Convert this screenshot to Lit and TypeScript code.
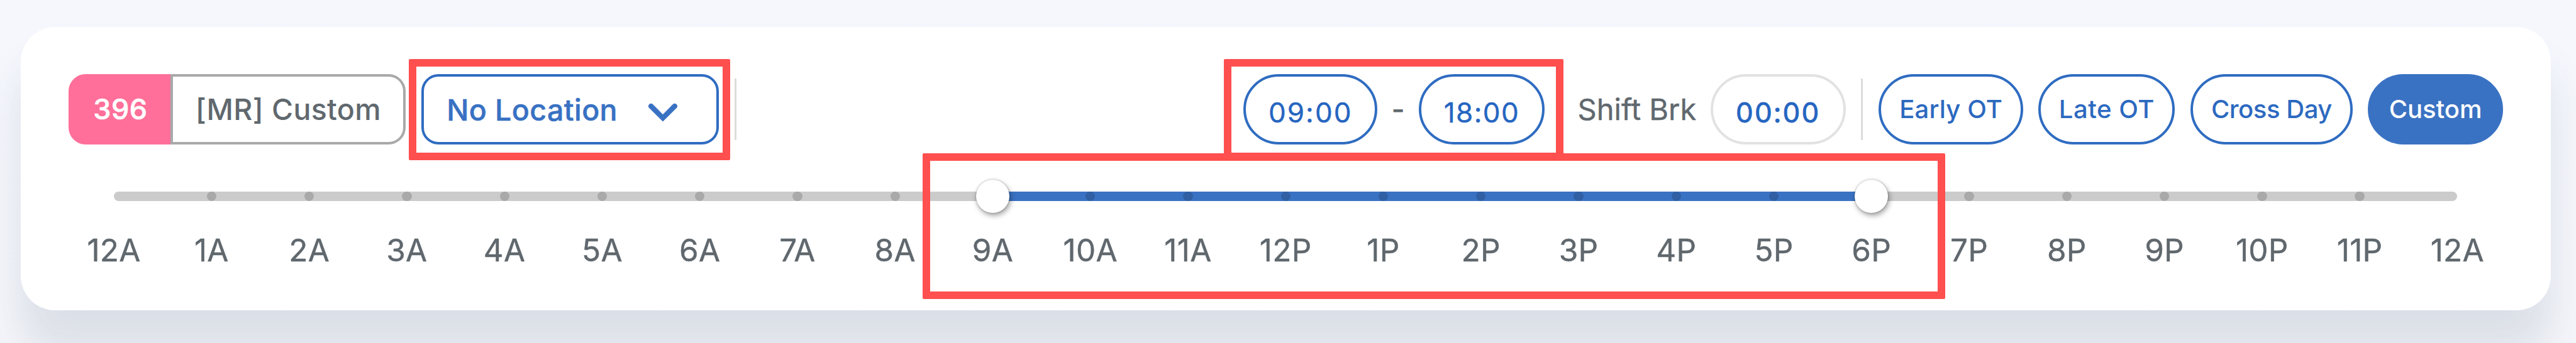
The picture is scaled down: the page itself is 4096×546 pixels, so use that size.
import { LitElement, html, css } from "lit";
import { customElement, property } from "lit/decorators.js";
import { classMap } from "lit/directives/class-map.js";

const HOURS = [
  "12A", "1A", "2A", "3A", "4A", "5A", "6A", "7A", "8A", "9A", "10A", "11A",
  "12P", "1P", "2P", "3P", "4P", "5P", "6P", "7P", "8P", "9P", "10P", "11P", "12A",
];

@customElement("hour-slider")
class HourSlider extends LitElement {
  @property({ type: Number }) from = 9;
  @property({ type: Number }) to = 18;

  static styles = css`
    :host { display: block; }
    .track {
      position: relative;
      height: 15.3px;
      margin: 0 77.63px;
      border-radius: 8px;
      background: #cbcbcb;
    }
    .range {
      position: absolute;
      top: 0;
      height: 100%;
      background: #3a72c3;
    }
    .dots {
      position: absolute;
      inset: 0 -77.63px;
      display: grid;
      grid-template-columns: repeat(25, 1fr);
      justify-items: center;
    }
    .dot { width: 15.3px; height: 15.3px; border-radius: 50%; background: #a9a9a9; }
    .dot.on { background: #305fa3; }
    .dot.end { visibility: hidden; }
    .thumb {
      position: absolute;
      top: 50%;
      width: 53px;
      height: 53px;
      margin: -26.8px 0 0 -26.5px;
      border-radius: 50%;
      background: #fff;
      box-shadow: 2px 4px 9px rgba(0, 0, 0, 0.38), 0 0 3px rgba(0, 0, 0, 0.3);
    }
    .labels {
      display: grid;
      grid-template-columns: repeat(25, 1fr);
      margin-top: 47.3px;
      font-size: 49.5px;
      line-height: 60px;
      letter-spacing: 0.3px;
      color: #60686e;
      text-align: center;
      -webkit-text-stroke: 0.4px currentColor;
    }
  `;

  render() {
    const pct = (h: number) => `${(h / 24) * 100}%`;
    return html`
      <div class="track">
        <div class="range" style="left:${pct(this.from)};width:${pct(this.to - this.from)}"></div>
        <div class="dots">
          ${HOURS.map((_, i) => html`<i class=${classMap({
            dot: true,
            on: i > this.from && i < this.to,
            end: i === 0 || i === 24,
          })}></i>`)}
        </div>
        <div class="thumb" style="left:${pct(this.from)}"></div>
        <div class="thumb" style="left:${pct(this.to)}"></div>
      </div>
      <div class="labels">${HOURS.map((h) => html`<span>${h}</span>`)}</div>
    `;
  }
}

@customElement("app-root")
class AppRoot extends LitElement {
  static styles = css`
    :host {
      display: block;
      position: relative;
      box-sizing: border-box;
      width: 4096px;
      height: 546px;
      padding: 42.8px 40.3px 0 33.1px;
      overflow: hidden;
      background: linear-gradient(#f5f7fd, #f5f6fa);
      font-family: "Inter", "Liberation Sans", sans-serif;
      color: #60686e;
    }
    * { box-sizing: border-box; }
    .card {
      height: 450.8px;
      padding-top: 75px;
      border-radius: 55px;
      background: #fff;
      box-shadow: 0 66px 66px rgba(48, 72, 112, 0.128);
    }
    .bar {
      display: flex;
      align-items: center;
      height: 112.2px;
      padding: 0 75.5px;
      white-space: nowrap;
    }
    .bar > * { flex: none; }
    .badge {
      display: flex;
      width: 536.6px;
      height: 112.2px;
      font-size: 46.5px;
      font-weight: 500;
    }
    .count {
      display: flex;
      align-items: center;
      justify-content: center;
      width: 162.8px;
      padding-left: 3px;
      border-radius: 27px 0 0 27px;
      background: #ff6f9a;
      color: #fff;
      font-size: 45px;
      letter-spacing: 0.5px;
      -webkit-text-stroke: 0.7px currentColor;
    }
    .name {
      display: flex;
      flex: 1;
      align-items: center;
      justify-content: center;
      border: 4px solid #a9a9a9;
      border-radius: 0 27px 27px 0;
      letter-spacing: 0.35px;
    }
    .select {
      display: flex;
      align-items: center;
      justify-content: space-between;
      width: 472.8px;
      height: 112.2px;
      margin-left: 24.7px;
      padding: 2px 61.7px 0 36.4px;
      border: 4px solid #2f6cc1;
      border-radius: 27px;
      color: #3871c3;
      font-size: 46.5px;
      font-weight: 500;
      letter-spacing: 0.4px;
      -webkit-text-stroke: 0.5px currentColor;
    }
    .chevron { width: 46px; height: 30px; margin-top: 8px; }
    .divider { width: 3.3px; height: 97.5px; background: #dcdcdc; }
    .d1 { margin-left: 24.9px; }
    .d2 { margin: 0 24.5px; }
    .space { flex: 1; }
    .pill {
      display: flex;
      align-items: center;
      justify-content: center;
      height: 112.2px;
      border: 4px solid #2f6cc1;
      border-radius: 56.1px;
      color: #2c69c0;
      font-size: 40px;
      font-weight: 500;
    }
    .time {
      padding-top: 10px;
      font-size: 44px;
      font-weight: 400;
      color: #2565c1;
      -webkit-text-stroke: 0.4px currentColor;
    }
    .start { width: 213.1px; letter-spacing: 2.1px; }
    .end { width: 200px; letter-spacing: 1.4px; }
    .brk {
      width: 214.9px;
      letter-spacing: 2.1px;
      border-color: #e2e2e2;
      -webkit-text-stroke: 0.9px currentColor;
    }
    .dash {
      width: 65.7px;
      font-size: 44px;
      text-align: center;
      -webkit-text-stroke: 0.8px currentColor;
    }
    .shift { width: 263.8px; padding-left: 52.6px; font-size: 47px; -webkit-text-stroke: 0.4px currentColor; }
    .early { width: 230.4px; letter-spacing: 0.17px; }
    .late { width: 216.8px; margin-left: 24.1px; letter-spacing: 0.55px; }
    .cross { width: 257.9px; margin-left: 24.7px; letter-spacing: -0.44px; }
    .custom { width: 215.2px; margin-left: 24.2px; border-color: #3a72c3; background: #3a72c3; color: #fff; }
    .hours { margin: 75px 70.7px 0 70.4px; }

    /* Call-out frames drawn over the panel */
    .frame { position: absolute; border: 12px solid #ff4f4f; border-radius: 2px; }
    .f-location { left: 650.2px; top: 94px; width: 511.1px; height: 161.4px; }
    .f-times { left: 1946.2px; top: 94px; width: 539.6px; height: 161.4px; }
    .f-range { left: 1467.4px; top: 243.6px; width: 1626px; height: 232.8px; }
  `;

  render() {
    return html`
      <div class="card">
        <div class="bar">
          <div class="badge"><span class="count">396</span><span class="name">[MR] Custom</span></div>
          <div class="select">
            <span>No Location</span>
            <svg class="chevron" viewBox="0 0 46 30" fill="none" stroke="#3a72c3" stroke-width="8.2" stroke-linecap="round">
              <path d="M4.2 5 L23 23.8 L41.8 5" />
            </svg>
          </div>
          <div class="divider d1"></div>
          <div class="space"></div>
          <div class="pill time start">09:00</div>
          <div class="dash">-</div>
          <div class="pill time end">18:00</div>
          <div class="shift">Shift Brk</div>
          <div class="pill time brk">00:00</div>
          <div class="divider d2"></div>
          <div class="pill early">Early OT</div>
          <div class="pill late">Late OT</div>
          <div class="pill cross">Cross Day</div>
          <div class="pill custom">Custom</div>
        </div>
        <hour-slider class="hours" .from=${9} .to=${18}></hour-slider>
      </div>
      <div class="frame f-location"></div>
      <div class="frame f-times"></div>
      <div class="frame f-range"></div>
    `;
  }
}
